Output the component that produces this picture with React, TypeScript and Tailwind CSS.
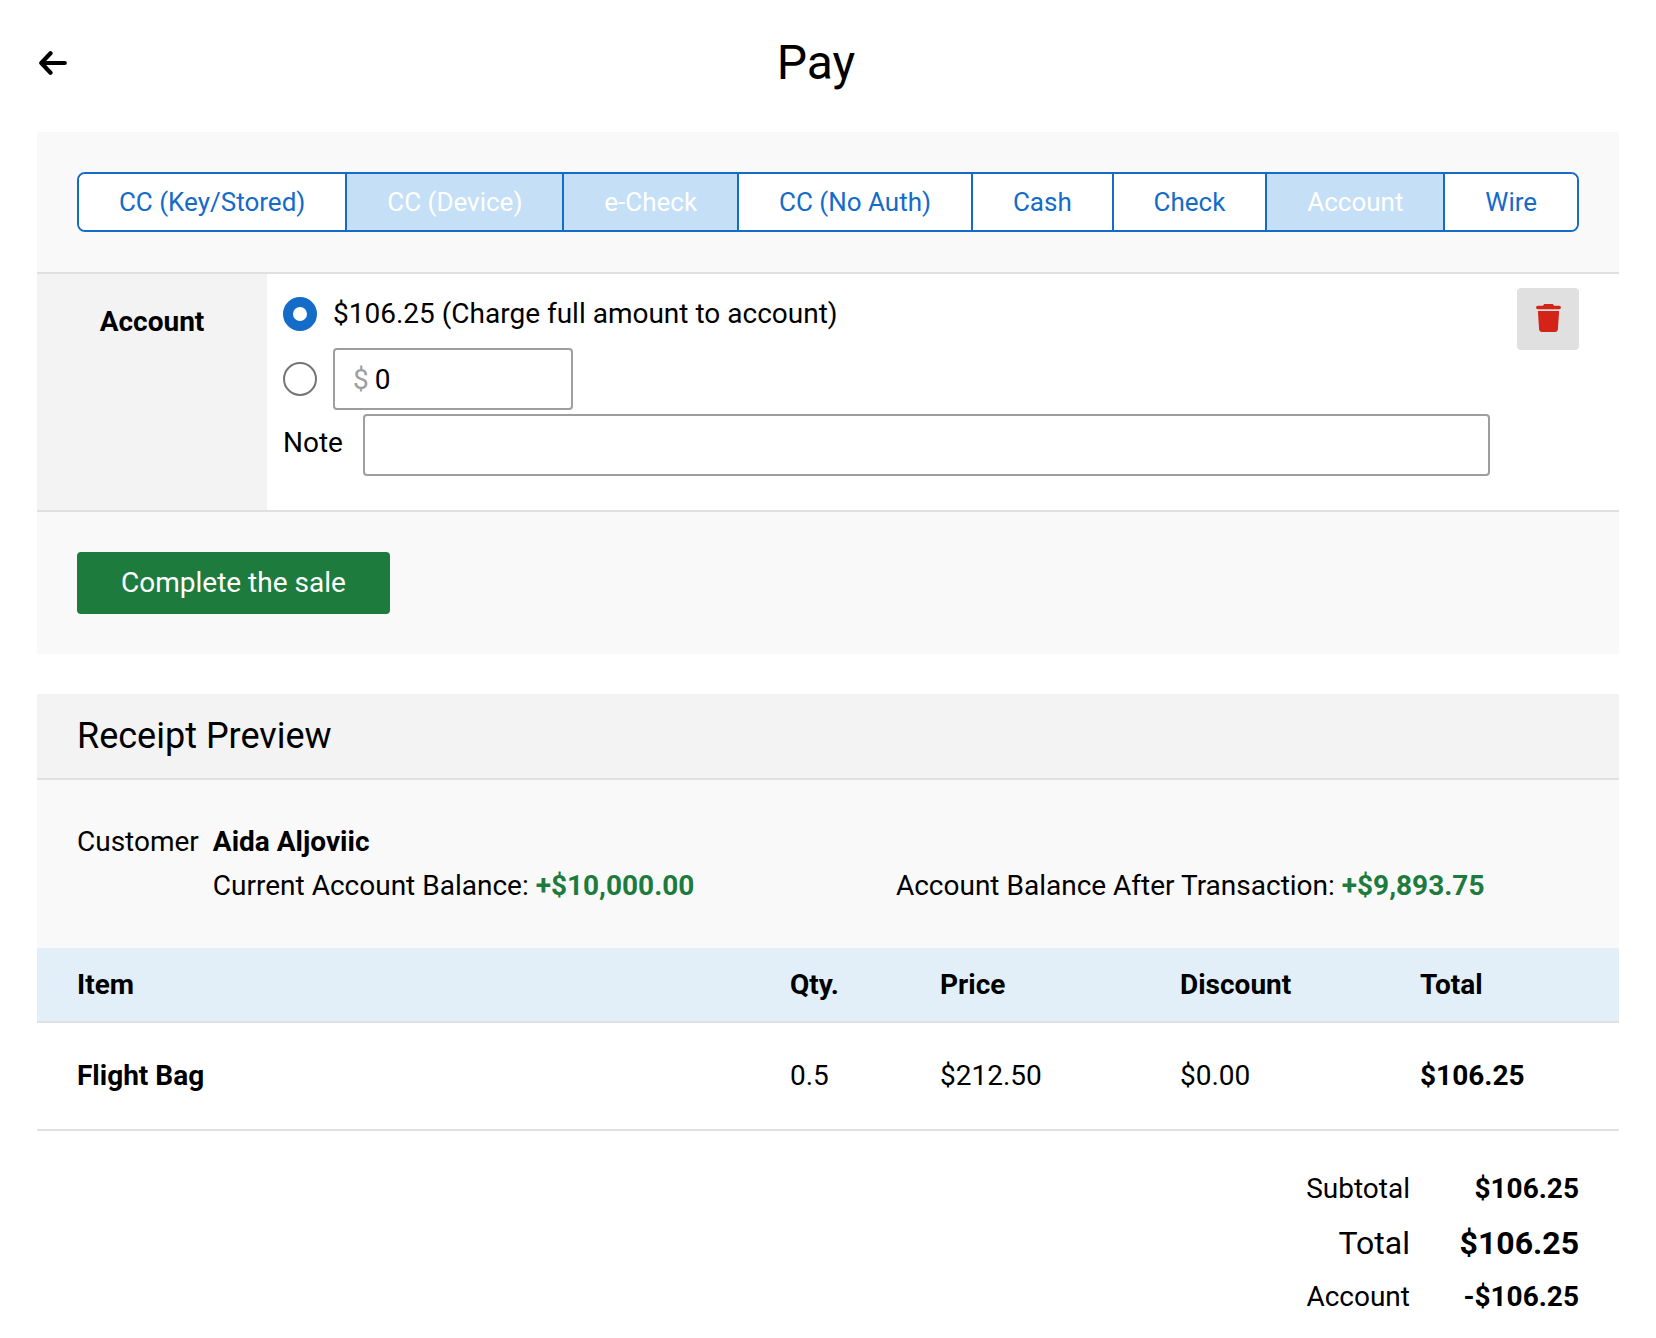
import React, { useState } from 'react';

interface PaymentMethod {
  label: string;
  disabled?: boolean;
}

const paymentMethods: PaymentMethod[] = [
  { label: 'CC (Key/Stored)' },
  { label: 'CC (Device)', disabled: true },
  { label: 'e-Check', disabled: true },
  { label: 'CC (No Auth)' },
  { label: 'Cash' },
  { label: 'Check' },
  { label: 'Account', disabled: true },
  { label: 'Wire' },
];

const items = [
  { name: 'Flight Bag', qty: '0.5', price: '$212.50', discount: '$0.00', total: '$106.25' },
];

const BackIcon = () => (
  <svg viewBox="0 0 28 24" className="w-7 h-6" fill="none" stroke="currentColor" strokeWidth="4.2" strokeLinecap="round" strokeLinejoin="round" aria-hidden="true">
    <path d="M25.800 12H3M11.500 2.300L2.300 12L11.500 21.700" />
  </svg>
);

const TrashIcon = () => (
  <svg viewBox="0 0 25 28" className="w-[25px] h-7" fill="currentColor" aria-hidden="true">
    <path d="M9.200 0h6.600c.9 0 1.600.5 1.900 1.200l.2.5h5.300a1.750 1.750 0 0 1 0 3.500H1.800a1.750 1.750 0 0 1 0-3.500h5.300l.2-.5C7.600.5 8.300 0 9.200 0Z" />
    <path d="M1.900 7h21.200l-1.200 18.600a2.600 2.600 0 0 1-2.600 2.400H5.700a2.600 2.600 0 0 1-2.600-2.400Z" />
  </svg>
);

const radioClass =
  'appearance-none size-[34px] shrink-0 rounded-full border-2 border-[#757575] bg-white checked:border-[10px] checked:border-[#146bc8]';

const PaymentPanel: React.FC = () => {
  const [chargeFull, setChargeFull] = useState(true);
  const [amount, setAmount] = useState('0');
  const [note, setNote] = useState('');

  return (
    <section className="bg-[#f9f9f9]">
      <div className="p-10 border-b-2 border-[#e0e0e0]">
        <div className="flex h-[60px] rounded-lg border-2 border-[#146bc8] divide-x-2 divide-[#146bc8] overflow-hidden text-[26px]">
          {paymentMethods.map((method) => (
            <button
              key={method.label}
              type="button"
              disabled={method.disabled}
              className="flex-auto px-2 whitespace-nowrap bg-white text-[#146bc8] disabled:bg-[#c5dff6] disabled:text-white"
            >
              {method.label}
            </button>
          ))}
        </div>
      </div>

      {/* Account payment */}
      <div className="flex bg-white border-b-2 border-[#e0e0e0]">
        <h2 className="w-[230px] shrink-0 bg-[#f3f3f3] pt-7 text-center font-bold">Account</h2>
        <div className="flex-1 pl-4 pt-5 pb-[34px]">
          <label className="flex items-center gap-4 h-10">
            <input type="radio" name="charge" className={radioClass} checked={chargeFull} onChange={() => setChargeFull(true)} />
            $106.25 (Charge full amount to account)
          </label>
          <div className="flex items-center gap-4 mt-3.5">
            <input
              type="radio"
              name="charge"
              aria-label="Charge another amount"
              className={radioClass}
              checked={!chargeFull}
              onChange={() => setChargeFull(false)}
            />
            <label className="flex items-center gap-1.5 w-60 h-[62px] px-[18px] pt-0.5 rounded border-2 border-[#9e9e9e] bg-white">
              <span className="text-[#9e9e9e]">$</span>
              <input
                type="text"
                aria-label="Amount"
                className="w-full min-w-0 outline-none"
                value={amount}
                onChange={(e) => setAmount(e.target.value)}
              />
            </label>
          </div>
          <div className="flex mt-1 gap-5">
            <label htmlFor="note" className="pt-[9px]">Note</label>
            <input
              id="note"
              type="text"
              className="flex-1 h-[62px] px-4 rounded border-2 border-[#9e9e9e] bg-white outline-none"
              value={note}
              onChange={(e) => setNote(e.target.value)}
            />
          </div>
        </div>
        <div className="pt-3.5 pl-[27px] pr-10">
          <button type="button" aria-label="Remove payment" className="flex items-center justify-center size-[62px] pb-0.5 rounded bg-[#e0e0e0] text-[#d32417]">
            <TrashIcon />
          </button>
        </div>
      </div>

      <div className="p-10">
        <button type="button" className="h-[62px] px-11 rounded bg-[#1e7b3e] text-white">Complete the sale</button>
      </div>
    </section>
  );
};

const ReceiptPreview: React.FC = () => (
  <section className="mt-10">
    <h2 className="flex items-center h-[86px] px-10 bg-[#f3f3f3] border-b-2 border-[#e0e0e0] text-4xl">Receipt Preview</h2>

    <div className="flex gap-3.5 p-10 bg-[#f9f9f9] leading-[44px]">
      <span>Customer</span>
      <div className="flex-1">
        <p className="font-bold">Aida Aljoviic</p>
        <div className="grid grid-cols-2">
          <p>Current Account Balance: <b className="text-[#1e7b3e]">+$10,000.00</b></p>
          <p>Account Balance After Transaction: <b className="text-[#1e7b3e]">+$9,893.75</b></p>
        </div>
      </div>
    </div>

    <table className="w-full table-fixed text-left">
      <colgroup>
        <col />
        <col className="w-[150px]" />
        <col className="w-60" />
        <col className="w-60" />
        <col className="w-[199px]" />
      </colgroup>
      <thead>
        <tr className="h-[74px] bg-[#e2eff9] border-b-2 border-[#e0e0e0]">
          <th className="pl-10">Item</th>
          <th>Qty.</th>
          <th>Price</th>
          <th>Discount</th>
          <th>Total</th>
        </tr>
      </thead>
      <tbody>
        {items.map((item) => (
          <tr key={item.name} className="h-[108px] border-b-2 border-[#e0e0e0]">
            <td className="pl-10 font-bold">{item.name}</td>
            <td>{item.qty}</td>
            <td>{item.price}</td>
            <td>{item.discount}</td>
            <td className="font-bold">{item.total}</td>
          </tr>
        ))}
      </tbody>
    </table>

    {/* Totals */}
    <dl className="grid grid-cols-[1fr_169px] px-10 pt-[31px] text-right leading-[54px]">
      <dt>Subtotal</dt>
      <dd className="font-bold">$106.25</dd>
      <dt className="text-[32px]">Total</dt>
      <dd className="text-[32px] font-bold">$106.25</dd>
      <dt>Account</dt>
      <dd className="font-bold">-$106.25</dd>
    </dl>
  </section>
);

export default function App() {
  return (
    <main className="min-h-screen bg-white px-[37px] pb-4 font-[Roboto,sans-serif] text-[28px] leading-10 text-black">
      <header className="flex items-center h-[132px] pb-1.5">
        <button type="button" aria-label="Back" className="px-0.5">
          <BackIcon />
        </button>
        <h1 className="flex-1 pr-14 text-center text-5xl">Pay</h1>
      </header>
      <PaymentPanel />
      <ReceiptPreview />
    </main>
  );
}
